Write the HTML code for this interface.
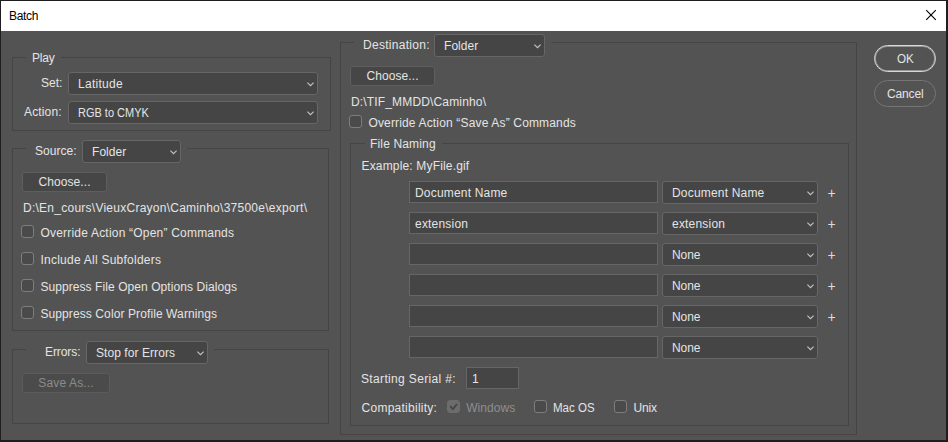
<!DOCTYPE html>
<html><head><meta charset="utf-8"><title>Batch</title>
<style>
html,body{margin:0;padding:0;}
body{width:948px;height:442px;position:relative;overflow:hidden;background:#535353;font-family:"Liberation Sans",sans-serif;font-size:12px;color:#e4e4e4;}
.abs{position:absolute;}
#frame{position:absolute;left:0;top:0;width:948px;height:442px;box-sizing:border-box;border:1px solid #1e1e1e;border-right-width:2px;border-bottom-width:2px;}
#title{position:absolute;left:1px;top:1px;width:945px;height:30px;background:#fff;}
.fs{position:absolute;box-sizing:border-box;border:1px solid #454545;}
.lg{position:absolute;background:#535353;height:14px;}
.t{position:absolute;white-space:nowrap;line-height:14px;height:14px;}
.sel,.inp,.btn{position:absolute;box-sizing:border-box;background:#454545;border:1px solid #666;}
.sel{height:23px;border-radius:3px;}
.sel svg{position:absolute;right:3px;top:9px;}
.btn{height:20px;border-radius:3px;border-color:#5e5e5e;background:#464646;}
.btn.dis{border-color:#5b5b5b;background:#4b4b4b;}
.cb{position:absolute;box-sizing:border-box;width:13px;height:13px;border:1px solid #7e7e7e;border-radius:3px;background:#4a4a4a;}
.pill{position:absolute;box-sizing:border-box;width:62px;height:27px;border-radius:13.5px;}
</style></head><body>

<div id="title"></div>
<div class="t" style="left:9px;top:9px;letter-spacing:-0.297px;color:#000;">Batch</div><svg class="abs" style="left:925px;top:9px" width="12" height="12" viewBox="0 0 12 12"><path d="M1.2 1.2 L10.8 10.8 M10.8 1.2 L1.2 10.8" stroke="#000" stroke-width="1.15" fill="none"/></svg>
<div class="fs" style="left:12px;top:57px;width:319px;height:74px"></div>
<div class="lg" style="left:26px;top:50px;width:35px"></div>
<div class="t" style="left:32px;top:51px;letter-spacing:-0.215px;">Play</div>
<div class="t" style="left:41px;top:76px;letter-spacing:-0.020px;">Set:</div>
<div class="sel" style="left:68px;top:72px;width:250px">
<div class="t" style="left:9px;top:4px;letter-spacing:0.271px;">Latitude</div><svg width="7" height="5" viewBox="0 0 7 5"><path d="M0.4 0.6 L3.5 3.7 L6.6 0.6" stroke="#c2c2c2" stroke-width="1.15" fill="none"/></svg></div>
<div class="t" style="left:24px;top:105px;letter-spacing:0.152px;">Action:</div>
<div class="sel" style="left:68px;top:101px;width:250px">
<div class="t" style="left:9px;top:4px;transform:scaleX(0.9152);transform-origin:0 0;">RGB to CMYK</div><svg width="7" height="5" viewBox="0 0 7 5"><path d="M0.4 0.6 L3.5 3.7 L6.6 0.6" stroke="#c2c2c2" stroke-width="1.15" fill="none"/></svg></div>
<div class="fs" style="left:12px;top:148px;width:317px;height:183px"></div>
<div class="lg" style="left:26px;top:141px;width:161px"></div>
<div class="t" style="left:35px;top:144px;letter-spacing:0.023px;">Source:</div>
<div class="sel" style="left:82px;top:140px;width:99px">
<div class="t" style="left:9px;top:4px;letter-spacing:0.057px;">Folder</div><svg width="7" height="5" viewBox="0 0 7 5"><path d="M0.4 0.6 L3.5 3.7 L6.6 0.6" stroke="#c2c2c2" stroke-width="1.15" fill="none"/></svg></div>
<div class="btn" style="left:22px;top:172px;width:85px">
<div class="t" style="left:15.5px;top:2px;letter-spacing:0.078px;">Choose...</div></div>
<div class="t" style="left:23px;top:201px;letter-spacing:0.253px;">D:\En_cours\VieuxCrayon\Caminho\37500e\export\</div>
<div class="cb" style="left:21px;top:225px"></div>
<div class="t" style="left:40.4px;top:226px;letter-spacing:0.206px;">Override Action “Open” Commands</div>
<div class="cb" style="left:21px;top:252px"></div>
<div class="t" style="left:40.4px;top:253px;letter-spacing:0.247px;">Include All Subfolders</div>
<div class="cb" style="left:21px;top:279px"></div>
<div class="t" style="left:40.4px;top:280px;letter-spacing:0.075px;">Suppress File Open Options Dialogs</div>
<div class="cb" style="left:21px;top:306px"></div>
<div class="t" style="left:40.4px;top:307px;letter-spacing:0.102px;">Suppress Color Profile Warnings</div>
<div class="fs" style="left:12px;top:349px;width:317px;height:75px"></div>
<div class="lg" style="left:26px;top:342px;width:188px"></div>
<div class="t" style="left:45px;top:345px;letter-spacing:-0.083px;">Errors:</div>
<div class="sel" style="left:86px;top:341px;width:122px">
<div class="t" style="left:9px;top:4px;letter-spacing:0.069px;">Stop for Errors</div><svg width="7" height="5" viewBox="0 0 7 5"><path d="M0.4 0.6 L3.5 3.7 L6.6 0.6" stroke="#c2c2c2" stroke-width="1.15" fill="none"/></svg></div>
<div class="btn dis" style="left:22px;top:373px;width:88px">
<div class="t" style="left:15.35px;top:2px;letter-spacing:0.141px;color:#8c8c8c;">Save As...</div></div>
<div class="fs" style="left:340px;top:42px;width:517px;height:393px"></div>
<div class="lg" style="left:354px;top:35px;width:197px"></div>
<div class="t" style="left:363px;top:38px;letter-spacing:0.284px;">Destination:</div>
<div class="sel" style="left:434px;top:34px;width:111px">
<div class="t" style="left:9px;top:4px;letter-spacing:0.057px;">Folder</div><svg width="7" height="5" viewBox="0 0 7 5"><path d="M0.4 0.6 L3.5 3.7 L6.6 0.6" stroke="#c2c2c2" stroke-width="1.15" fill="none"/></svg></div>
<div class="btn" style="left:350px;top:66px;width:85px">
<div class="t" style="left:15.5px;top:2px;letter-spacing:0.078px;">Choose...</div></div>
<div class="t" style="left:351px;top:95px;letter-spacing:0.156px;">D:\TIF_MMDD\Caminho\</div>
<div class="cb" style="left:349px;top:115px"></div>
<div class="t" style="left:368.4px;top:116px;letter-spacing:0.161px;">Override Action “Save As” Commands</div>
<div class="fs" style="left:350px;top:143px;width:499px;height:283px"></div>
<div class="lg" style="left:365px;top:136px;width:77px"></div>
<div class="t" style="left:370px;top:137px;letter-spacing:0.157px;">File Naming</div>
<div class="t" style="left:361.5px;top:159px;letter-spacing:0.166px;">Example: MyFile.gif</div>
<div class="inp" style="left:409px;top:181px;width:249px;height:22px">
<div class="t" style="left:5px;top:4px;letter-spacing:0.188px;">Document Name</div></div>
<div class="sel" style="left:662px;top:181px;width:156px">
<div class="t" style="left:9px;top:4px;letter-spacing:0.188px;">Document Name</div><svg width="7" height="5" viewBox="0 0 7 5"><path d="M0.4 0.6 L3.5 3.7 L6.6 0.6" stroke="#c2c2c2" stroke-width="1.15" fill="none"/></svg></div>
<div class="t" style="left:827.5px;top:185px;color:#dcdcdc;font-size:14px;line-height:16px;height:16px;">+</div>
<div class="inp" style="left:409px;top:212px;width:249px;height:22px">
<div class="t" style="left:5px;top:4px;letter-spacing:0.203px;">extension</div></div>
<div class="sel" style="left:662px;top:212px;width:156px">
<div class="t" style="left:9px;top:4px;letter-spacing:0.203px;">extension</div><svg width="7" height="5" viewBox="0 0 7 5"><path d="M0.4 0.6 L3.5 3.7 L6.6 0.6" stroke="#c2c2c2" stroke-width="1.15" fill="none"/></svg></div>
<div class="t" style="left:827.5px;top:216px;color:#dcdcdc;font-size:14px;line-height:16px;height:16px;">+</div>
<div class="inp" style="left:409px;top:243px;width:249px;height:22px"></div>
<div class="sel" style="left:662px;top:243px;width:156px">
<div class="t" style="left:9px;top:4px;letter-spacing:-0.096px;">None</div><svg width="7" height="5" viewBox="0 0 7 5"><path d="M0.4 0.6 L3.5 3.7 L6.6 0.6" stroke="#c2c2c2" stroke-width="1.15" fill="none"/></svg></div>
<div class="t" style="left:827.5px;top:247px;color:#dcdcdc;font-size:14px;line-height:16px;height:16px;">+</div>
<div class="inp" style="left:409px;top:274px;width:249px;height:22px"></div>
<div class="sel" style="left:662px;top:274px;width:156px">
<div class="t" style="left:9px;top:4px;letter-spacing:-0.096px;">None</div><svg width="7" height="5" viewBox="0 0 7 5"><path d="M0.4 0.6 L3.5 3.7 L6.6 0.6" stroke="#c2c2c2" stroke-width="1.15" fill="none"/></svg></div>
<div class="t" style="left:827.5px;top:278px;color:#dcdcdc;font-size:14px;line-height:16px;height:16px;">+</div>
<div class="inp" style="left:409px;top:305px;width:249px;height:22px"></div>
<div class="sel" style="left:662px;top:305px;width:156px">
<div class="t" style="left:9px;top:4px;letter-spacing:-0.096px;">None</div><svg width="7" height="5" viewBox="0 0 7 5"><path d="M0.4 0.6 L3.5 3.7 L6.6 0.6" stroke="#c2c2c2" stroke-width="1.15" fill="none"/></svg></div>
<div class="t" style="left:827.5px;top:309px;color:#dcdcdc;font-size:14px;line-height:16px;height:16px;">+</div>
<div class="inp" style="left:409px;top:336px;width:249px;height:22px"></div>
<div class="sel" style="left:662px;top:336px;width:156px">
<div class="t" style="left:9px;top:4px;letter-spacing:-0.096px;">None</div><svg width="7" height="5" viewBox="0 0 7 5"><path d="M0.4 0.6 L3.5 3.7 L6.6 0.6" stroke="#c2c2c2" stroke-width="1.15" fill="none"/></svg></div>
<div class="t" style="left:361px;top:372px;letter-spacing:0.346px;">Starting Serial #:</div>
<div class="inp" style="left:466px;top:367px;width:53px;height:22px">
<div class="t" style="left:5px;top:4px;">1</div></div>
<div class="t" style="left:361.6px;top:401px;letter-spacing:0.251px;">Compatibility:</div>
<div class="cb" style="left:447px;top:400px;border-color:#6c6c6c;background:#6c6c6c"><svg class="abs" style="left:0;top:0" width="11" height="11" viewBox="0 0 11 11"><path d="M2.2 5.2 L4.9 8 L9 3.2" stroke="#464646" stroke-width="1.9" fill="none"/></svg></div>
<div class="t" style="left:466.2px;top:401px;letter-spacing:0.052px;color:#8e8e8e;">Windows</div>
<div class="cb" style="left:534px;top:400px"></div>
<div class="t" style="left:552.6px;top:401px;transform:scaleX(0.9598);transform-origin:0 0;">Mac OS</div>
<div class="cb" style="left:614px;top:400px"></div>
<div class="t" style="left:633.5px;top:401px;letter-spacing:-0.139px;">Unix</div>
<div class="pill" style="left:874px;top:45px;border:1px solid #d8d8d8;box-shadow:inset 0 0 0 1px rgba(216,216,216,0.5)">
<div class="t" style="left:22px;top:6px;transform:scaleX(0.9686);transform-origin:0 0;">OK</div></div>
<div class="pill" style="left:874px;top:80px;border:1px solid #757575">
<div class="t" style="left:12px;top:6px;letter-spacing:-0.152px;">Cancel</div></div>
<div id="frame"></div>
</body></html>
